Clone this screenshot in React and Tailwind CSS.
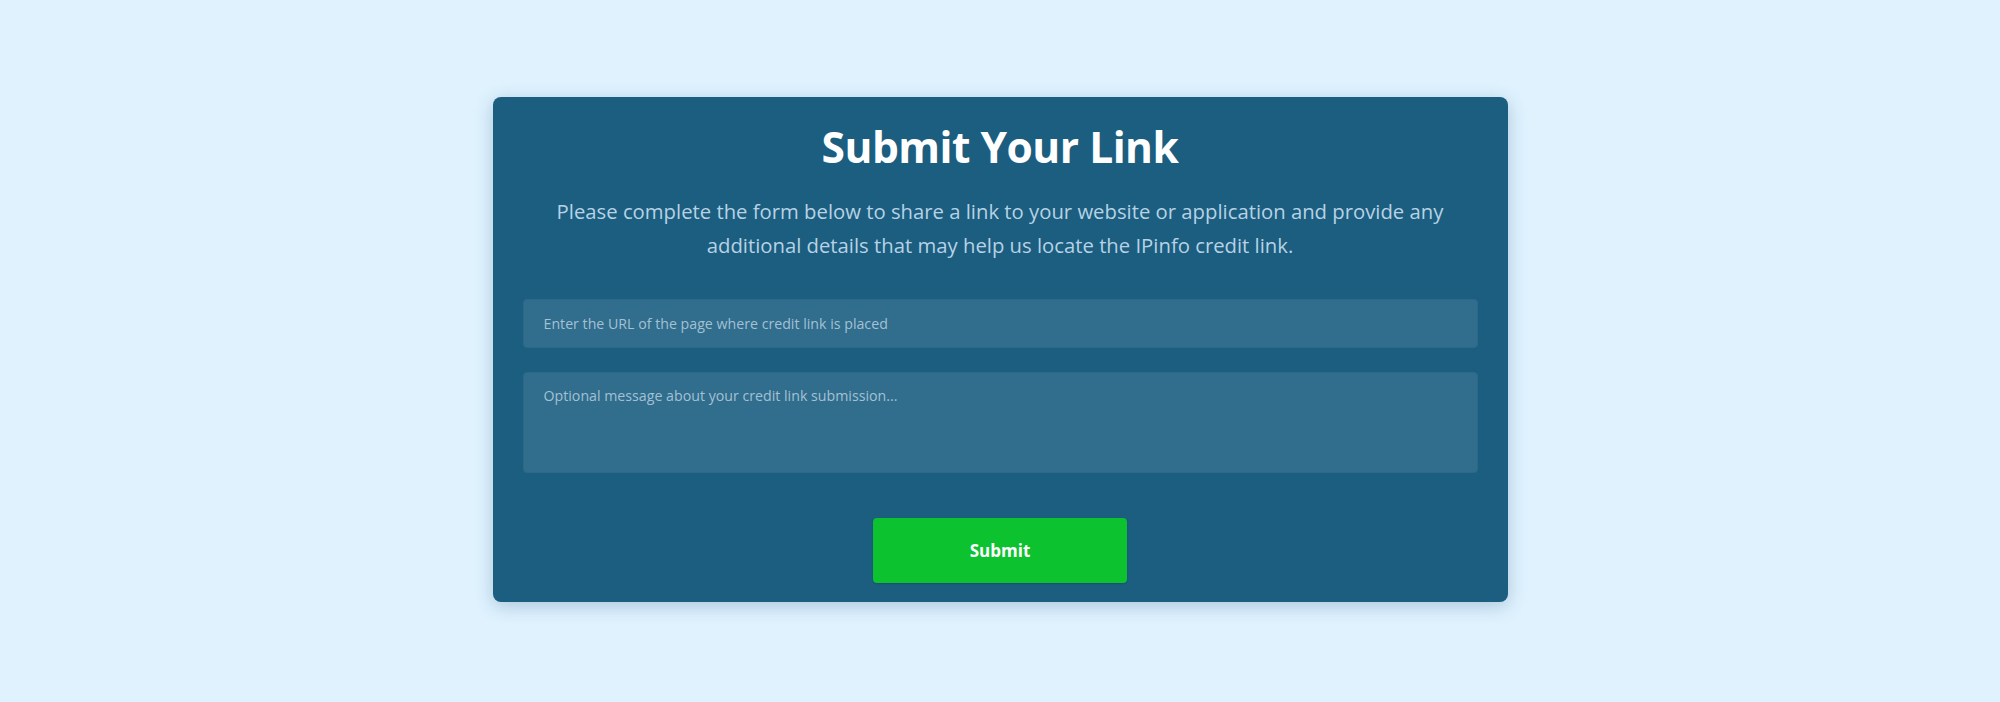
import React, { useState } from 'react';

const SubmitLinkForm = () => {
    const [url, setUrl] = useState('');
    const [message, setMessage] = useState('');

    return (
        <div className="w-[1015px] mx-auto bg-[#1b5e80] rounded-lg px-[30px] pt-5 pb-[19px] shadow-[0_4px_18px_rgba(40,90,130,0.28)]">
            <h1 className="text-center text-white font-bold text-[42.5px] leading-[60px] tracking-[-0.5px]">
                Submit Your Link
            </h1>
            <p className="mt-[17px] text-center text-[#b7d2e4] text-[20.3px] leading-[34px]">
                Please complete the form below to share a link to your website or application and provide any additional details that may help us locate the IPinfo credit link.
            </p>

            <div className="mt-[37px] flex flex-col gap-6">
                <input
                    type="text"
                    value={url}
                    onChange={e => setUrl(e.target.value)}
                    placeholder="Enter the URL of the page where credit link is placed"
                    className="w-full h-[49px] px-5 bg-[#316d8c] border border-[#2d6889] rounded text-[14.2px] text-white placeholder:text-[#a3c1d5] focus:outline-none"
                />
                <textarea
                    value={message}
                    onChange={e => setMessage(e.target.value)}
                    placeholder="Optional message about your credit link submission..."
                    className="w-full h-[101px] px-5 pt-[12px] bg-[#316d8c] border border-[#2d6889] rounded text-[14.2px] text-white placeholder:text-[#a3c1d5] resize-none focus:outline-none"
                />
            </div>

            <div className="mt-[45px] flex justify-center">
                <button className="w-[254px] h-[65px] bg-[#0cc22f] rounded-sm text-white font-bold text-[17px] shadow-[0_1px_2px_rgba(0,0,0,0.15)]">
                    Submit
                </button>
            </div>
        </div>
    );
};

const App = () => {
    return (
        <div className="min-h-screen bg-[#dff2fe] pt-[97px] pb-[99px]" style={{ fontFamily: '"Open Sans", "Noto Sans", sans-serif' }}>
            <SubmitLinkForm />
        </div>
    );
};

export default App;
